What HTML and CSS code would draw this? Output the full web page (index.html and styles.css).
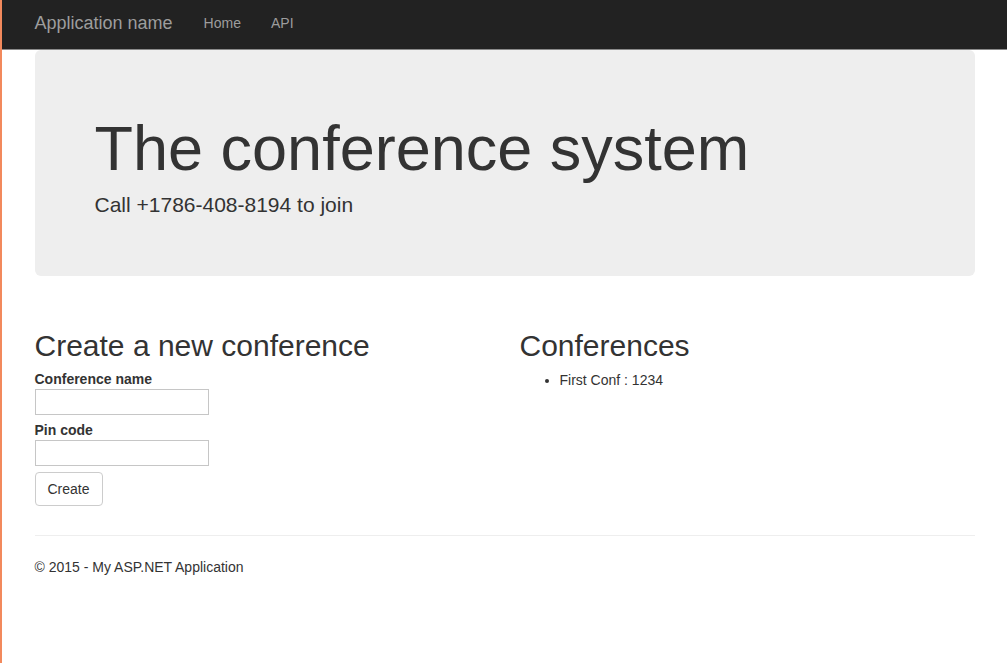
FILE: index.html
```html
<!DOCTYPE html>
<html lang="en">
<head>
    <meta charset="UTF-8">
    <meta name="viewport" content="width=device-width, initial-scale=1.0">
    <title>The conference system</title>
    <link rel="stylesheet" href="styles.css">
</head>
<body>
    <!-- Top navigation -->
    <div class="navbar">
        <div class="container navbar-inner">
            <a class="navbar-brand" href="#">Application name</a>
            <ul class="navbar-nav">
                <li><a href="#">Home</a></li>
                <li><a href="#">API</a></li>
            </ul>
        </div>
    </div>

    <div class="container body-content">
        <div class="jumbotron">
            <h1>The conference system</h1>
            <p>Call +1786-408-8194 to join</p>
        </div>

        <div class="row">
            <div class="col">
                <h2>Create a new conference</h2>
                <form class="conf-form" onsubmit="return false;">
                    <label for="confName">Conference name</label>
                    <input type="text" id="confName" />
                    <label for="pinCode">Pin code</label>
                    <input type="text" id="pinCode" />
                    <button type="submit" class="btn">Create</button>
                </form>
            </div>
            <div class="col">
                <h2>Conferences</h2>
                <ul class="conf-list">
                    <li>First Conf : 1234</li>
                </ul>
            </div>
        </div>

        <hr />
        <footer>
            <p>&copy; 2015 - My ASP.NET Application</p>
        </footer>
    </div>
</body>
</html>
```

FILE: styles.css
```css
body {
    font-family: "Liberation Sans", Arial, Helvetica, sans-serif;
    font-size: 14px;
    line-height: 20px;
    color: #333;
    background-color: #fff;
    margin: 0;
    min-height: 100vh;
    border-left: 2px solid #f2895c;
    box-sizing: border-box;
}
.container {
    width: 970px;
    margin: 0 auto;
    padding: 0 15px;
    box-sizing: border-box;
}
.navbar {
    background-color: #222;
    border-bottom: 1px solid #8a8a8a;
}
.navbar-inner {
    display: flex;
    align-items: flex-start;
    height: 49px;
}
.navbar-brand {
    font-size: 18px;
    line-height: 20px;
    padding: 13px 15px 16px 0;
    color: #9d9d9d;
    text-decoration: none;
}
.navbar-nav {
    display: flex;
    list-style: none;
    margin: 0 0 0 1px;
    padding: 0;
}
.navbar-nav a {
    display: block;
    padding: 13px 15px 16px;
    line-height: 20px;
    color: #9d9d9d;
    text-decoration: none;
}
.navbar-nav a:hover {
    color: #fff;
}
.jumbotron {
    background-color: #eee;
    border-radius: 6px;
    padding: 48px 60px;
    margin-bottom: 30px;
}
.jumbotron h1 {
    font-size: 63px;
    font-weight: normal;
    line-height: 63px;
    margin: 19px 0 10px;
}
.jumbotron p {
    font-size: 21px;
    line-height: 29px;
    margin: 0 0 9px;
}
.row {
    display: grid;
    grid-template-columns: 1fr 1fr;
    column-gap: 30px;
}
h2 {
    font-size: 30px;
    font-weight: normal;
    line-height: 33px;
    margin: 23px 0 8px;
}
.conf-form {
    display: flex;
    flex-direction: column;
    align-items: flex-start;
}
.conf-form label {
    font-weight: bold;
    line-height: 19px;
}
.conf-form input {
    width: 174px;
    height: 26px;
    box-sizing: border-box;
    border: 1px solid #c6c6c6;
    padding: 1px 3px;
    margin: 0 0 6px;
    font-family: inherit;
    font-size: 13px;
}
.btn {
    height: 34px;
    padding: 6px 12px;
    font-family: inherit;
    font-size: 14px;
    line-height: 20px;
    color: #333;
    background-color: #fff;
    border: 1px solid #ccc;
    border-radius: 4px;
    cursor: pointer;
}
.btn:hover {
    background-color: #e6e6e6;
}
.conf-list {
    margin: 0;
    padding-left: 40px;
}
hr {
    border: 0;
    border-top: 1px solid #eee;
    margin: 29px 0 21px;
}
footer p {
    margin: 0;
}
```
